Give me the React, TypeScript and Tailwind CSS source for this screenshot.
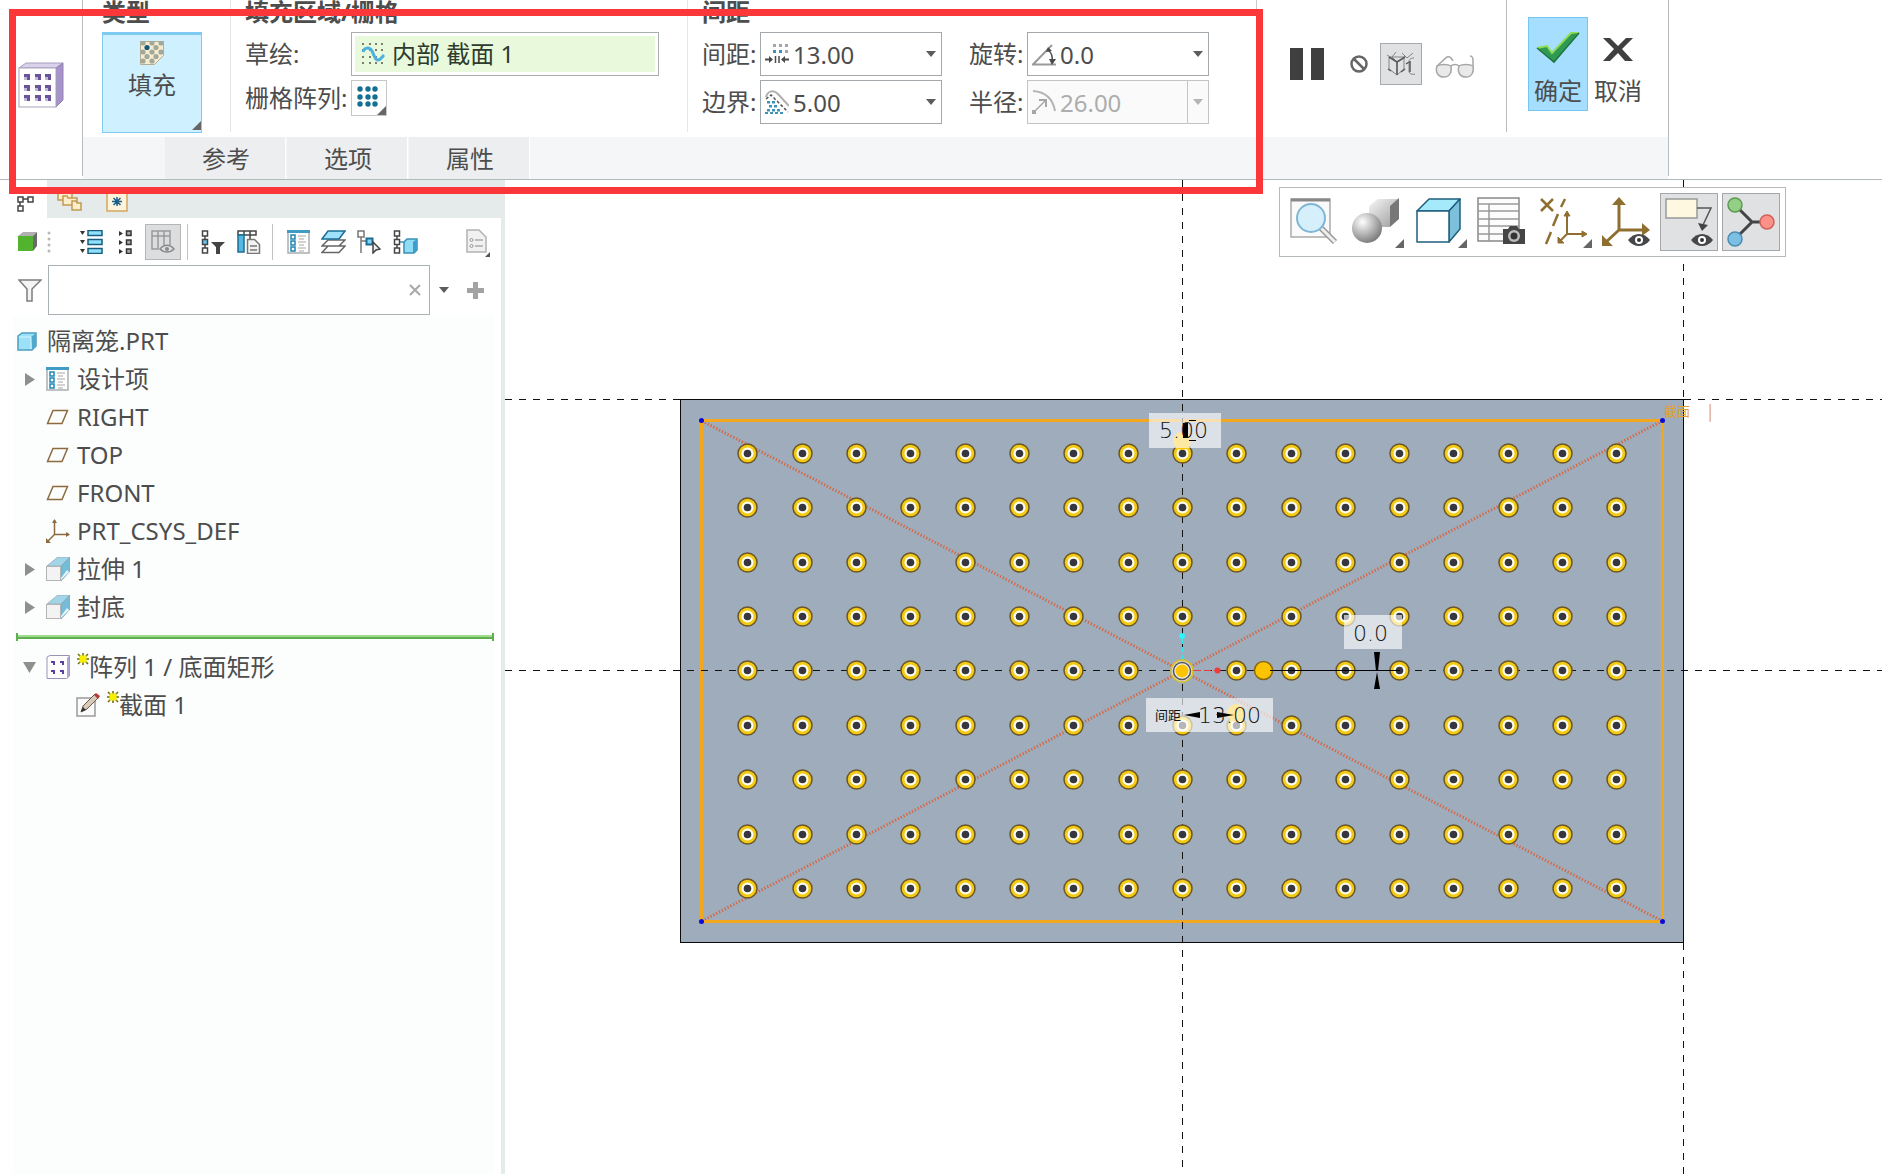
import React from "react";

type IconProps = { w: number; h: number; children: React.ReactNode; className?: string };

function Icon({ w, h, children, className = "" }: IconProps) {
  return (
    <svg width={w} height={h} viewBox={`0 0 ${w} ${h}`} className={`shrink-0 ${className}`} fill="none" aria-hidden="true">
      {children}
    </svg>
  );
}

/* ---------- ribbon icons ---------- */

function PatternCubeIcon() {
  return (
    <Icon w={46} h={46}>
      <path d="M1 6 8 1h37l-7 5z" fill="#d9d2ea" stroke="#a79cc0" />
      <path d="M38 6l7-5v37l-7 7z" fill="#a793cc" stroke="#9283b3" />
      <rect x="1" y="6" width="37" height="39" fill="#fff" stroke="#a9a3ba" />
      {[12, 23, 33].map((y) =>
        [6, 17, 27].map((x) => (
          <g key={`${x}-${y}`}>
            <rect x={x} y={y} width="6" height="6" fill="#c3b7dc" />
            <path d={`M${x} ${y}h6v6h-3v-3h-3z`} fill="#6a5399" />
          </g>
        ))
      )}
    </Icon>
  );
}

function FillIcon() {
  return (
    <Icon w={24} h={24}>
      <path d="M.5.5h23v14l-9 9H.5z" fill="#f6ecd2" stroke="#b7ad92" />
      {[2, 11, 20].map((y) => [2, 11, 20].map((x) => <circle key={`${x}-${y}`} cx={x + 1} cy={y} r={x + y > 36 ? 0 : 2.6} fill="#a3a899" />))}
      {[6.5, 15.5].map((y) => [7, 16].map((x) => <circle key={`${x}-${y}`} cx={x} cy={y} r={2.6} fill={x === 7 && y === 6.5 ? "#125a78" : "#a3a899"} />))}
    </Icon>
  );
}

function SketchIcon() {
  return (
    <Icon w={24} h={24}>
      {[2, 8, 15, 21].map((y) => [2, 9, 15, 21].map((x) => <rect key={`${x}-${y}`} x={x - 1} y={y - 1} width="2" height="2" fill="#7b7b70" />))}
      <path d="M2 10c1-4 6-6 9-1 3 6 3 9 6 9s4-3 6-5" stroke="#4fb0df" strokeWidth="3" />
    </Icon>
  );
}

function GridIcon() {
  return (
    <Icon w={22} h={22}>
      {[3, 11, 18].map((y) => [3, 11, 18].map((x) => <circle key={`${x}-${y}`} cx={x} cy={y} r="2.7" fill="#136f93" />))}
    </Icon>
  );
}

function SpacingIcon() {
  return (
    <Icon w={24} h={24}>
      {[2, 8].map((y) =>
        [8, 14, 20].map((x) => <rect key={`${x}-${y}`} x={x} y={y} width="3" height="3" fill={y === 8 && x < 20 ? "#3b93bd" : "#a5a5a5"} />)
      )}
      <path d="M0 17.500h5M19 17.500h5" stroke="#4a4a4a" strokeWidth="2" />
      <path d="M4 14l4 3.500L4 21zM20 14l-4 3.500 4 3.500z" fill="#4a4a4a" />
      <path d="M10.500 14v7M14 14v7" stroke="#4a4a4a" strokeWidth="1.500" />
    </Icon>
  );
}

function BorderIcon() {
  return (
    <Icon w={24} h={24}>
      <path d="M1 7c2-7 8-7 12-3l11 12" stroke="#b0b0b0" strokeWidth="2" />
      <path d="M1 9l5-4 17 17" stroke="#555" strokeWidth="1.500" strokeDasharray="3 2" />
      {[
        [3, 12], [8, 12], [5, 16], [10, 16], [3, 20], [8, 20], [13, 20], [1, 23], [6, 23], [11, 23], [16, 23],
      ].map(([x, y]) => (
        <rect key={`${x}-${y}`} x={x - 1} y={y - 1} width="3" height="2.500" fill="#3b93bd" />
      ))}
    </Icon>
  );
}

function AngleIcon() {
  return (
    <Icon w={24} h={24}>
      <path d="M20 3 1 22.500h23" stroke="#9a9a9a" strokeWidth="2" />
      <path d="M16 8c4 3 5 6 4 12" stroke="#4a4a4a" strokeWidth="1.500" />
      <path d="M14 10l2-5 4 4zM17 17h7l-4 6z" fill="#4a4a4a" />
    </Icon>
  );
}

function RadiusIcon() {
  return (
    <Icon w={24} h={24}>
      <path d="M1 1c13 1 20 8 22 20" stroke="#b4b4b4" strokeWidth="2" />
      <path d="M2 22 13 11" stroke="#a6a6a6" strokeWidth="1.500" />
      <path d="M7 10h7v7" stroke="#a6a6a6" strokeWidth="2" />
      <rect x="0" y="20" width="4" height="4" fill="#a6a6a6" />
    </Icon>
  );
}

function Corner({ className = "" }: { className?: string }) {
  return (
    <Icon w={9} h={9} className={`absolute right-0 bottom-0 ${className}`}>
      <path d="M9 0v9H0z" fill="#666" />
    </Icon>
  );
}

function DownTriangle({ color = "#5c5c5c" }: { color?: string }) {
  return (
    <Icon w={10} h={7}>
      <path d="M0 0h10L5 6z" fill={color} />
    </Icon>
  );
}

/* ---------- ribbon ---------- */

function Combo({ id, label, icon, value, disabled = false }: { id: string; label: string; icon: React.ReactNode; value: string; disabled?: boolean }) {
  return (
    <div className="flex items-center">
      <label htmlFor={id} className="w-[58px] whitespace-nowrap">
        {label}
      </label>
      <div className={`flex h-[44px] w-[182px] items-center border ${disabled ? "border-[#c4c4c4] bg-[#fafafa] text-[#adadad]" : "border-[#a2a8ab] bg-white"}`}>
        <span className="flex w-[32px] shrink-0 justify-center">{icon}</span>
        <input id={id} defaultValue={value} disabled={disabled} className="h-full w-0 flex-1 bg-transparent outline-none" />
        <button
          type="button"
          disabled={disabled}
          aria-label={`${label} 列表`}
          className={`flex h-full w-[21px] items-center justify-center ${disabled ? "border-l border-[#c4c4c4]" : ""}`}
        >
          <DownTriangle color={disabled ? "#b5b5b5" : undefined} />
        </button>
      </div>
    </div>
  );
}

function SectionTitle({ children }: { children: React.ReactNode }) {
  return <h2 className="h-[32px] text-[24px] leading-[24px] font-bold">{children}</h2>;
}

function Ribbon() {
  return (
    <header className="flex h-[180px] shrink-0 border-b border-[#b0b9bc] bg-white">
      <div className="w-[82px] shrink-0 pt-[62px] pl-[18px]">
        <PatternCubeIcon />
      </div>
      <div className="mb-[3px] shrink-0 border-x border-[#b7bcc0]">
        <div className="flex h-[137px] items-start">
          <section className="h-[132px] w-[148px] border-r border-[#e4e6e8] pl-[19px]">
            <SectionTitle>类型</SectionTitle>
            <button type="button" className="relative flex h-[101px] w-[100px] flex-col items-center border border-t-[3px] border-[#7fcaf2] bg-[#cff0fe] pt-[6px]">
              <FillIcon />
              <span className="mt-1 leading-[32px]">填充</span>
              <Corner className="mb-[2px]" />
            </button>
          </section>
          <section className="h-[132px] w-[457px] border-r border-[#e4e6e8] pl-[14px]">
            <SectionTitle>填充区域/栅格</SectionTitle>
            <div className="flex items-center">
              <label htmlFor="sketch" className="w-[106px]">
                草绘:
              </label>
              <div className="flex h-[44px] w-[308px] border border-[#a9aeb0] bg-white p-[3px]">
                <div className="flex flex-1 items-center gap-[7px] bg-[#e8fadb] pl-[6px]">
                  <SketchIcon />
                  <input id="sketch" readOnly defaultValue="内部 截面 1" className="w-0 flex-1 bg-transparent text-[#2e3a2e] outline-none" />
                </div>
              </div>
            </div>
            <div className="mt-1 flex items-center">
              <span className="w-[106px] whitespace-nowrap">栅格阵列:</span>
              <button type="button" aria-label="栅格阵列" className="relative flex h-[36px] w-[36px] items-center justify-center border border-[#c5c8ca] pr-[2px] pb-[2px]">
                <GridIcon />
                <Corner />
              </button>
            </div>
          </section>
          <section className="h-[137px] w-[569px] border-r border-[#c9cdd0] pl-[14px]">
            <SectionTitle>间距</SectionTitle>
            <div className="grid grid-cols-[240px_240px] gap-x-[27px] gap-y-1">
              <Combo id="spacing" label="间距:" icon={<SpacingIcon />} value="13.00" />
              <Combo id="rotate" label="旋转:" icon={<AngleIcon />} value="0.0" />
              <Combo id="border" label="边界:" icon={<BorderIcon />} value="5.00" />
              <Combo id="radius" label="半径:" icon={<RadiusIcon />} value="26.00" disabled />
            </div>
          </section>
          <section className="flex h-[132px] w-[250px] items-start border-r border-[#b7bcc0] pt-[43px] pl-[33px]">
            <button type="button" aria-label="暂停" className="flex h-[42px] items-center">
              <Icon w={34} h={32}>
                <path d="M0 0h13v32H0zM21 0h13v32H21z" fill="#3f3f3f" />
              </Icon>
            </button>
            <button type="button" aria-label="无预览" className="ml-[26px] flex h-[42px] items-center">
              <Icon w={18} h={18}>
                <circle cx="9" cy="9" r="7.500" stroke="#666" strokeWidth="2.500" />
                <path d="M4 4l10 10" stroke="#666" strokeWidth="2.500" />
              </Icon>
            </button>
            <button type="button" aria-label="几何预览" className="ml-[12px] flex h-[42px] w-[42px] items-center justify-center border border-[#a6a8aa] bg-[#dfe1e3]">
              <Icon w={30} h={28}>
                <path
                  d="M3 7h16M3 7v12l8 6V12L3 7M11 12l8-5M11 25l7-6V8M11 12 6 7 10 2M1 5l3 2M16 3l5 5 6-5M28 8c-4 0-5 2-5 4v10c1 2 3 3 6 2"
                  stroke="#858585"
                />
                <path d="M3 7l8 5v13M11 12l8-5M24 11v11M2 19l3 2M20 14l3-2M15 22l4-3" stroke="#5a5a5a" strokeWidth="1.500" />
              </Icon>
            </button>
            <button type="button" aria-label="特征预览" className="ml-[13px] flex h-[42px] items-center pt-[6px]">
              <Icon w={40} h={24}>
                <g stroke="#a6a6a6" strokeWidth="1.500" fill="#e9e9e9">
                  <path d="M2 11c3-2 11-2 14 0 1 6-1 11-7 11s-9-5-7-11zM24 11c3-2 11-2 14 0 1 6-1 11-7 11s-9-5-7-11z" />
                  <path d="M16 11c2-2 6-2 8 0M2 11 12 2c2-1 4 0 6 4M38 11V5c0-3-2-4-3-4" fill="none" />
                </g>
              </Icon>
            </button>
          </section>
          <section className="flex w-[161px] items-start pt-[17px] pl-[21px]">
            <button type="button" className="flex h-[94px] w-[60px] flex-col items-center border border-[#76c6f4] bg-[#a5deff] pt-[14px]">
              <Icon w={44} h={31}>
                <path d="M1 16l10-2 5 7L35 1l8-1-25 31z" fill="#2f9a52" />
                <path d="M1 16l10-2 5 7L35 1l8-1" stroke="#8fdc57" strokeWidth="2" />
                <path d="M1 16l17 14L43 1" stroke="#20733f" strokeWidth="1.500" />
              </Icon>
              <span className="mt-[12px] leading-[32px]">确定</span>
            </button>
            <button type="button" className="flex h-[94px] w-[60px] flex-col items-center pt-[21px]">
              <Icon w={30} h={23}>
                <path d="M0 0h7l8 8 8-8h7L19 11l11 12h-8l-7-8-8 8H0l11-12z" fill="#404040" />
              </Icon>
              <span className="mt-[14px] leading-[32px]">取消</span>
            </button>
          </section>
        </div>
        <nav className="flex h-[42px] gap-px bg-[#f5f6f8] pl-[82px]">
          {["参考", "选项", "属性"].map((t) => (
            <button key={t} type="button" className="w-[121px] border-r border-white bg-[#eceeef] pt-[2px] pl-[2px]">
              {t}
            </button>
          ))}
        </nav>
      </div>
    </header>
  );
}

/* ---------- model tree ---------- */

function ListIcon() {
  return (
    <Icon w={23} h={24}>
      <rect x="1" y="1" width="21" height="22" fill="#fff" stroke="#a9aeb2" strokeWidth="1.500" />
      <path d="M0 1.500h23" stroke="#3f9dc4" strokeWidth="3" />
      {[6, 12, 18].map((y) => (
        <g key={y}>
          <rect x="4" y={y - 1} width="4" height="4" stroke="#1f86b4" strokeWidth="1.500" />
          <path d={`M11 ${y}h8M12 ${y + 3}h5`} stroke="#a5a5a5" />
        </g>
      ))}
    </Icon>
  );
}

function PlaneIcon() {
  return (
    <Icon w={23} h={16}>
      <path d="M1.500 14.500 7 1.500h14.500l-5.500 13z" stroke="#8b6b3f" strokeWidth="1.500" />
    </Icon>
  );
}

function CsysIcon() {
  return (
    <Icon w={24} h={24}>
      <path d="M8.500 1v14.500H23M8.500 15.500 1 23" stroke="#8b6b3f" strokeWidth="1.500" />
      <path d="M6 4l2.500-4L11 4zM20 13l4 2.500-4 2.500zM0 19v5h5z" fill="#8b6b3f" />
    </Icon>
  );
}

function ExtrudeIcon() {
  return (
    <Icon w={24} h={24}>
      <path d="M1 9 12 0h12L15 9z" fill="#a3d5e8" stroke="#9ab2bc" />
      <path d="M15 9l9-9v14L15 24z" fill="#74bcd8" stroke="#8aa8b5" />
      <path d="M15 21l6-8 2 2-8 8z" fill="#dff6ff" />
      <rect x=".5" y="9.500" width="14" height="14" fill="#f3f3f3" stroke="#b4b4b4" />
    </Icon>
  );
}

function PartIcon() {
  return (
    <Icon w={20} h={19}>
      <path d="M1 4 5 1h14v13l-4 4H1z" fill="#9be1f9" stroke="#4f9dbf" strokeWidth="1.500" />
      <path d="M14 5l5-4v13l-4 4z" fill="#4fa8d0" />
      <path d="M2 5h12v12" stroke="#d8f5ff" />
    </Icon>
  );
}

function PatternIcon() {
  return (
    <Icon w={24} h={24}>
      <path d="M1 2 4 .5h19.500V21l-3 2.500H1z" fill="#fff" stroke="#9b92b8" />
      <path d="M21 3l2.500-2.500V21L21 23.500z" fill="#b3a4d6" />
      {[6, 15].map((y) => [5, 14].map((x) => <path key={`${x}-${y}`} d={`M${x} ${y}h4v4h-2v-2h-2z`} fill="#5d3fa0" />))}
    </Icon>
  );
}

function SectionIcon() {
  return (
    <Icon w={24} h={24}>
      <rect x="1" y="5" width="18" height="18" fill="#fbfbfb" stroke="#9a9a9a" strokeWidth="1.500" />
      <path d="M5 19l2-6L19 1l4 3L11 16z" fill="#d9cbb8" stroke="#6b5a4a" />
      <path d="M18 2l2-2 4 3-2 3z" fill="#b5393a" />
      <path d="M5 19l2-5 3 3z" fill="#333" />
    </Icon>
  );
}

function Spark() {
  return (
    <Icon w={12} h={12} className="mb-[16px]">
      <path d="M6 0v12M0 6h12M1 1l10 10M11 1 1 11" stroke="#6d6a00" strokeWidth="1.500" />
      <rect x="2.500" y="2.500" width="7" height="7" fill="#f6f000" />
    </Icon>
  );
}

type Node = { label: string; icon: React.ReactNode; level: number; state?: "open" | "closed"; spark?: boolean };

const upper: Node[] = [
  { label: "隔离笼.PRT", icon: <PartIcon />, level: 0 },
  { label: "设计项", icon: <ListIcon />, level: 1, state: "closed" },
  { label: "RIGHT", icon: <PlaneIcon />, level: 1 },
  { label: "TOP", icon: <PlaneIcon />, level: 1 },
  { label: "FRONT", icon: <PlaneIcon />, level: 1 },
  { label: "PRT_CSYS_DEF", icon: <CsysIcon />, level: 1 },
  { label: "拉伸 1", icon: <ExtrudeIcon />, level: 1, state: "closed" },
  { label: "封底", icon: <ExtrudeIcon />, level: 1, state: "closed" },
];

const lower: Node[] = [
  { label: "阵列 1 / 底面矩形", icon: <PatternIcon />, level: 1, state: "open", spark: true },
  { label: "截面 1", icon: <SectionIcon />, level: 2, spark: true },
];

const indent = ["pl-[4px]", "pl-[8px]", "pl-[38px]"];

function Tree({ nodes }: { nodes: Node[] }) {
  return (
    <ul>
      {nodes.map((n) => (
        <li key={n.label} className={`flex h-[38px] items-center ${indent[n.level]}`}>
          {n.level > 0 && (
            <span className="flex w-[25px] shrink-0 items-center pl-[2px]">
              {n.state && (
                <button type="button" aria-label={n.label} aria-expanded={n.state === "open"}>
                  <Icon w={13} h={13}>
                    <path d={n.state === "open" ? "M0 1h13L6.500 12z" : "M2 0l10 6.500L2 13z"} fill="#8f8f8f" />
                  </Icon>
                </button>
              )}
            </span>
          )}
          <span className={`flex shrink-0 ${n.level === 0 ? "w-[30px]" : "w-[31px]"}`}>{n.icon}</span>
          {n.spark && <Spark />}
          <span className="whitespace-pre">{n.label}</span>
        </li>
      ))}
    </ul>
  );
}

function TreeNodesArt({ accent = "#fff" }: { accent?: string }) {
  return (
    <g stroke="#444" strokeWidth="1.500">
      <path d="M4 4v16" />
      <rect x="1.500" y="1" width="5" height="5" fill="#fff" />
      <rect x="1.500" y="9.500" width="5" height="5" fill={accent} />
      <rect x="1.500" y="18" width="5" height="5" fill="#fff" />
    </g>
  );
}

function TreeToolbar() {
  return (
    <div className="flex h-[47px] items-center pl-[18px]">
      <Icon w={19} h={20}>
        <path d="M0 4 5 0h14l-4 4z" fill="#b0b0b0" />
        <path d="M15 4l4-4v14l-4 5z" fill="#6a6a6a" />
        <rect y="4" width="15" height="15" fill="#52b32f" />
      </Icon>
      <Icon w={4} h={24} className="ml-[10px]">
        {[3, 9, 15, 21].map((y) => (
          <circle key={y} cx="2" cy={y} r="1.500" fill="#b8b8b8" />
        ))}
      </Icon>
      <button type="button" aria-label="全部展开" className="ml-[29px]">
        <Icon w={23} h={24}>
          {[1, 10, 19].map((y) => (
            <g key={y}>
              <path d={`M0 ${y}h5l-2.500 4z`} fill="#333" />
              <rect x="8" y={y - 0.5} width="14" height="5" fill="#8fe0fb" stroke="#175d80" strokeWidth="1.500" />
            </g>
          ))}
        </Icon>
      </button>
      <button type="button" aria-label="全部折叠" className="ml-[16px]">
        <Icon w={13} h={24}>
          {[1, 10, 19].map((y) => (
            <g key={y}>
              <path d={`M0 ${y}l4 2.500-4 2.500z`} fill="#333" />
              <rect x="7.500" y={y} width="4.500" height="4.500" fill="#aaa" stroke="#333" strokeWidth="1.500" />
            </g>
          ))}
        </Icon>
      </button>
      <button type="button" aria-label="树列" className="ml-[13px] flex h-[36px] w-[36px] items-center justify-center border border-[#b3b5b7] bg-[#dcdddf]">
        <Icon w={24} h={24}>
          <path d="M1 1h18v5H1zM1 6h6v13H1zM7 1v5M13 1v16M19 6v9" stroke="#9a9a9a" strokeWidth="1.500" />
          <path d="M9 19c4-5 10-5 14 0-4 4-10 4-14 0z" fill="#dcdddf" stroke="#8a8a8a" strokeWidth="1.500" />
          <circle cx="16" cy="19" r="2" fill="#8a8a8a" />
        </Icon>
      </button>
      <span className="ml-[6px] h-[36px] w-px bg-[#bfc3c5]" />
      <button type="button" aria-label="树过滤器" className="ml-[13px]">
        <Icon w={24} h={24}>
          <TreeNodesArt accent="#64c5ee" />
          <path d="M10 12h14l-5 5v7h-4v-7z" fill="#444" />
        </Icon>
      </button>
      <button type="button" aria-label="树设置" className="ml-[12px]">
        <Icon w={24} h={24}>
          <path d="M1 1h18v4H1zM7 1v4M13 1v9" stroke="#444" strokeWidth="1.500" />
          <path d="M1 5h6v17H1z" fill="#55b8e2" stroke="#1c6d94" strokeWidth="1.500" />
          <path d="M10.500 9.500h7l5 5v9h-12z" fill="#f3f3f3" stroke="#777" strokeWidth="1.500" />
          <path d="M13 16h7M13 20h7" stroke="#777" strokeWidth="1.500" />
        </Icon>
      </button>
      <span className="ml-[11px] h-[36px] w-px bg-[#bfc3c5]" />
      <button type="button" aria-label="设计项" className="ml-[14px]">
        <ListIcon />
      </button>
      <button type="button" aria-label="层" className="ml-[11px]">
        <Icon w={25} h={24}>
          <path d="M1 22.500 7 16h17l-6 6.500zM1 16l6-6h17l-6 6z" fill="#fff" stroke="#666" strokeWidth="1.500" />
          <path d="M1 9 7 1h17l-6 8z" fill="#9fe2fb" stroke="#1c6d94" strokeWidth="1.500" />
        </Icon>
      </button>
      <button type="button" aria-label="定位" className="ml-[11px]">
        <Icon w={24} h={24}>
          <path d="M4 6v17M4 11h6" stroke="#777" strokeWidth="1.500" />
          <rect x="1" y="1" width="6" height="6" fill="#fff" stroke="#777" strokeWidth="1.500" />
          <rect x="9.500" y="8.500" width="6" height="6" fill="#7fd6f7" stroke="#1c6d94" strokeWidth="2" />
          <path d="M16 12v11l3-3 4-1z" fill="#eee" stroke="#444" strokeWidth="1.500" />
        </Icon>
      </button>
      <button type="button" aria-label="预选" className="ml-[12px]">
        <Icon w={25} h={24}>
          <TreeNodesArt />
          <path d="M7 12h4M11 12l3-3h10v11l-3 3H11z" fill="#8fdcf7" stroke="#3d8fb5" strokeWidth="1.500" />
          <path d="M20 12l4-3v11l-4 3z" fill="#3f9ecb" />
        </Icon>
      </button>
      <button type="button" aria-label="显示" className="relative mr-[11px] ml-auto flex h-[30px] w-[24px] pt-[2px]">
        <Icon w={21} h={24}>
          <path d="M1 1h12l7 7v15H1z" fill="#f1f1f1" stroke="#b3b3b3" strokeWidth="1.500" />
          <circle cx="5.500" cy="11" r="1.500" stroke="#999" />
          <circle cx="5.500" cy="17" r="1.500" stroke="#999" />
          <path d="M9 11h8M9 17h8" stroke="#aaa" strokeWidth="1.500" />
        </Icon>
        <Icon w={5} h={5} className="absolute right-0 bottom-0">
          <path d="M5 0v5H0z" fill="#555" />
        </Icon>
      </button>
    </div>
  );
}

function ModelPanel() {
  return (
    <aside className="flex w-[505px] shrink-0 flex-col border-r-[4px] border-[#e5eaeb] bg-white">
      <div className="flex h-[38px] shrink-0 bg-white">
        <button type="button" aria-label="模型树" className="flex w-[47px] items-end pb-[6px] pl-[17px]">
          <Icon w={17} h={16}>
            <path d="M3 3h12M3 3v10" stroke="#444" strokeWidth="1.500" />
            <path d="M1 1h5v5H1zM11 1h5v5h-5zM1 10h5v5H1z" fill="#fff" stroke="#444" strokeWidth="1.500" />
          </Icon>
        </button>
        <div className="-mr-[4px] flex flex-1 items-end bg-[#e5eaeb] pb-[6px] pl-[10px]">
          <button type="button" aria-label="文件夹浏览器">
            <Icon w={25} h={22}>
              {[0, 5, 14].map((x, i) => (
                <path key={x} d={`M${x + 1} ${i * 5 + 1}h4l1 2h${i === 2 ? 4 : 9}v7H${x + 1}z`} fill="#fdeecb" stroke="#c29a52" strokeWidth="1.500" />
              ))}
            </Icon>
          </button>
          <button type="button" aria-label="收藏夹" className="ml-[24px]">
            <Icon w={22} h={22}>
              <rect x="1" y="1" width="20" height="20" fill="#fdf3dc" stroke="#d2a85c" strokeWidth="1.500" />
              <path d="M11 7v9M6 11.500h10M7.500 8l7 7M14.500 8l-7 7" stroke="#1a5f88" strokeWidth="1.500" />
            </Icon>
          </button>
        </div>
      </div>
      <TreeToolbar />
      <div className="flex h-[50px] items-center">
        <Icon w={24} h={23} className="ml-[18px]">
          <path d="M1 1h22l-9 9v12h-5V10z" fill="#f4f4f4" stroke="#7c7c7c" strokeWidth="1.500" />
        </Icon>
        <div className="ml-[6px] flex h-[50px] flex-1 items-center border border-[#abb2b5]">
          <input aria-label="搜索" className="h-full w-0 flex-1 bg-transparent px-2 outline-none" />
          <button type="button" aria-label="清除" className="mr-[8px]">
            <Icon w={12} h={12}>
              <path d="M1 1l10 10M11 1 1 11" stroke="#a8a8a8" strokeWidth="2" />
            </Icon>
          </button>
        </div>
        <button type="button" aria-label="搜索选项" className="ml-[9px]">
          <DownTriangle />
        </button>
        <button type="button" aria-label="添加" className="mr-[17px] ml-[18px]">
          <Icon w={17} h={17}>
            <path d="M6 0h5v6h6v5h-6v6H6v-6H0V6h6z" fill="#a3a3a3" />
          </Icon>
        </button>
      </div>
      <div className="mr-[7px] ml-[13px] flex-1 bg-[#fcfdfd] pt-[7px]">
        <Tree nodes={upper} />
        <div className="flex h-[22px] items-center pl-[3px]">
          <span className="h-[8px] w-[2px] bg-[#5fae4f]" />
          <span className="h-[4px] flex-1 border-b-2 border-[#5fae4f] bg-[#9fdc8c]" />
          <span className="h-[8px] w-[2px] bg-[#5fae4f]" />
        </div>
        <Tree nodes={lower} />
      </div>
    </aside>
  );
}

/* ---------- graphics area ---------- */

const columns = Array.from({ length: 17 }, (_, i) => Math.round(747.4 + i * 54.31) + 0.5);
const rows = Array.from({ length: 9 }, (_, i) => Math.round(453 + i * 54.36) + 0.5);

function Model() {
  return (
    <svg className="absolute inset-0 h-full w-full" viewBox="505 180 1377 994" preserveAspectRatio="xMinYMin slice" fill="none">
      <g stroke="#111" strokeDasharray="7 7">
        <path d="M505 399.500h175M1684 399.500h198M1683.500 180v219M1683.500 943v231" />
      </g>
      <rect x="680.500" y="399.500" width="1003" height="543" fill="#9facbc" stroke="#0a0a0a" />
      <path d="M702 421 1662 921M702 921 1662 421" stroke="#d9633a" strokeWidth="3" strokeDasharray="1.200 2" />
      <rect x="701.500" y="420.500" width="961" height="501" stroke="#f2a71f" strokeWidth="3" />
      <g stroke="#111" strokeDasharray="7 7">
        <path d="M1182.500 180v994M505 670.500h1377" />
      </g>
      {[420.5, 921.5].map((y) => [701.5, 1662.5].map((x) => <circle key={`${x}-${y}`} cx={x} cy={y} r="2.500" fill="#0b0bd6" />))}
      {rows.map((y) =>
        columns.map((x) => (
          <g key={`${x}-${y}`}>
            <circle cx={x} cy={y} r="9.500" fill="#f4cb14" stroke="#6a5626" strokeWidth="1.500" />
            <circle cx={x} cy={y} r="6" fill="#fffdf0" />
            <circle cx={x} cy={y} r="3.800" fill="#35363f" />
          </g>
        ))
      )}
      <path d="M1182.500 660v-24" stroke="#35e6ec" strokeWidth="1.500" strokeDasharray="5 3" />
      <circle cx="1182" cy="636" r="3" fill="#2ff3f6" />
      <path d="M1194 670.500h24" stroke="#e0413a" strokeDasharray="7 3" />
      <circle cx="1217.500" cy="670.500" r="3" fill="#ef3b3b" />
      <circle cx="1182" cy="671" r="11" fill="#d9d9d9" stroke="#d8c020" strokeWidth="1.500" />
      <circle cx="1182" cy="671" r="8.500" fill="#eee" stroke="#555" strokeWidth="1.500" />
      <circle cx="1182" cy="671" r="6.500" fill="#fcc300" />
      <circle cx="1263.500" cy="670.500" r="9" fill="#fcc300" stroke="#8a6a10" strokeWidth="1.500" />
      <circle cx="1182" cy="441" r="9" fill="#fcc300" />
      <circle cx="1236" cy="713" r="9" fill="#fcc300" />
      <path d="M1270 670.500h130" stroke="#000" />
      <path d="M1374 652h6l-2 19h-2zM1374 689h6l-3-17z" fill="#000" />

      <g fill="#fff" fillOpacity=".64">
        <rect x="1149" y="413" width="72" height="35" />
        <rect x="1344" y="615" width="58" height="34" />
        <rect x="1146" y="698" width="127" height="34" />
      </g>
      <path d="M1183 423h5v15h-5z" fill="#000" />
      <path d="M1189 420.500h7M1189 440.500h7" stroke="#000" />
      <path d="M1184 715l16-3v6zM1217 712l17 3-17 3z" fill="#000" />
      <g fill="#111" fontFamily="'DejaVu Sans', sans-serif" fontWeight="200" fontSize="22">
        <text x="1159" y="438">5.00</text>
        <text x="1353" y="641">0.0</text>
        <text x="1198" y="723">13.00</text>
      </g>
      <text x="1155" y="720" fontSize="13" fill="#111" fontFamily="'Noto Sans CJK SC', sans-serif">
        间距
      </text>
      <text x="1664" y="416" fontSize="13" fill="#e3a02c" fontFamily="'Noto Sans CJK SC', sans-serif">
        截面
      </text>
      <text x="1708" y="417" fontSize="16" fill="#e3a02c" fontFamily="'Noto Sans CJK SC', sans-serif">
        |
      </text>
    </svg>
  );
}

function Eye({ x, y }: { x: number; y: number }) {
  return (
    <g transform={`translate(${x} ${y})`}>
      <path d="M-11 0C-5-8 5-8 11 0 5 8-5 8-11 0z" fill="#45474b" />
      <circle r="4" fill="#fff" />
      <circle r="2" fill="#333" />
    </g>
  );
}

const viewTools: { name: string; active?: boolean; menu?: boolean; art: React.ReactNode }[] = [
  {
    name: "重新调整",
    art: (
      <>
        <rect x="1" y="2" width="39" height="38" fill="#fafafa" stroke="#aaa" strokeWidth="1.500" />
        <path d="M1 3h39" stroke="#888" strokeWidth="3" />
        <path d="M31 31l14 14" stroke="#999" strokeWidth="6" />
        <path d="M31 31l14 14" stroke="#eee" strokeWidth="3" />
        <circle cx="21" cy="21" r="14" fill="#d5f0fb" stroke="#7fb6d4" strokeWidth="2" />
      </>
    ),
  },
  {
    name: "渲染样式",
    menu: true,
    art: (
      <>
        <defs>
          <radialGradient id="ball" cx=".35" cy=".3" r=".75">
            <stop stopColor="#fff" />
            <stop offset="1" stopColor="#777" />
          </radialGradient>
          <linearGradient id="box" x2="1" y2="1">
            <stop stopColor="#f7f7f7" />
            <stop offset="1" stopColor="#999" />
          </linearGradient>
        </defs>
        <path d="M17 9h21v21H17zM17 9l9-7h21l-9 7z" fill="url(#box)" />
        <path d="M38 9l9-8v21l-9 8z" fill="#777" />
        <circle cx="15" cy="31" r="15" fill="url(#ball)" />
      </>
    ),
  },
  {
    name: "显示样式",
    menu: true,
    art: (
      <g stroke="#1f5f7f" strokeWidth="1.500" strokeLinejoin="round">
        <path d="M2 14 14 2h31L34 14z" fill="#a5eafb" />
        <path d="M34 14 45 2v30L34 45z" fill="#7cc0da" />
        <path d="M2 14h32v31H2z" fill="#fff" />
      </g>
    ),
  },
  {
    name: "已保存方向",
    art: (
      <>
        <rect x="1" y="1" width="41" height="43" fill="#fcfcfc" stroke="#888" strokeWidth="1.500" />
        <path d="M1 7h41M1 14h41M1 22h41M1 29h41M1 37h41M12 7v37" stroke="#999" strokeWidth="1.500" />
        <path d="M26 32h5l2-3h7l2 3h6v15H26z" fill="#454545" />
        <circle cx="37" cy="39" r="6" fill="#bbb" />
        <circle cx="37" cy="39" r="3.500" fill="#333" />
      </>
    ),
  },
  {
    name: "基准显示",
    menu: true,
    art: (
      <g stroke="#8f6f30" strokeWidth="2.500">
        <path d="M1 2l12 12M13 2 1 14M25 2l-4 8M18 17l-5 12M11 35l-5 12" />
        <path d="M27 17v20h18M27 37l-8 8" strokeWidth="2" />
        <path d="M24 19l3-5 3 5zM42 34l5 3-5 3zM18 40v6h6z" fill="#8f6f30" strokeWidth="1" />
      </g>
    ),
  },
  {
    name: "坐标系显示",
    art: (
      <>
        <path d="M17 4v29h26M17 33 4 45" stroke="#8f6f30" strokeWidth="3" />
        <path d="M10 8l7-8 7 8zM40 26l8 7-8 6zM0 38v11h11z" fill="#8f6f30" />
        <Eye x={37} y={43} />
      </>
    ),
  },
  {
    name: "注释显示",
    active: true,
    art: (
      <>
        <rect x="1" y="2" width="31" height="19" fill="#fef8e0" stroke="#999" strokeWidth="1.500" />
        <path d="M32 11h14l-8 17" stroke="#555" strokeWidth="1.500" />
        <path d="M33 26l10 2-6 6z" fill="#444" />
        <Eye x={37} y={43} />
      </>
    ),
  },
  {
    name: "旋转中心",
    active: true,
    art: (
      <>
        <path d="M8 8l17 17L8 42M25 25h16" stroke="#444" strokeWidth="3" />
        <circle cx="8" cy="8" r="7" fill="#93cf85" stroke="#5d9a52" strokeWidth="1.500" />
        <circle cx="40" cy="25" r="7" fill="#fb9189" stroke="#d06059" strokeWidth="1.500" />
        <circle cx="8" cy="42" r="7" fill="#7cbfe3" stroke="#4a8db2" strokeWidth="1.500" />
      </>
    ),
  },
];

function ViewToolbar() {
  return (
    <div className="absolute top-[7px] right-[96px] flex h-[70px] w-[507px] items-center justify-between border border-[#b4b9bb] bg-white px-[5px]">
      {viewTools.map((t) => (
        <button
          key={t.name}
          type="button"
          aria-label={t.name}
          className={`relative flex h-[58px] w-[58px] items-center justify-center border ${t.active ? "border-[#a4a7aa] bg-[#dfe1e3]" : "border-transparent"}`}
        >
          <Icon w={48} h={50}>
            {t.art}
          </Icon>
          {t.menu && <Corner className="mb-[2px]" />}
        </button>
      ))}
    </div>
  );
}

export default function App() {
  return (
    <div className="relative flex h-screen flex-col overflow-hidden bg-white font-['Noto_Sans','Noto_Sans_CJK_SC',sans-serif] text-[24px] leading-[32px] text-[#4d4d4d]">
      <Ribbon />
      <div className="flex min-h-0 flex-1">
        <ModelPanel />
        <main className="relative flex-1 overflow-hidden">
          <Model />
          <ViewToolbar />
        </main>
      </div>
      <div className="pointer-events-none absolute top-[9px] left-[9px] h-[185px] w-[1254px] border-[7px] border-[#fb3739]" />
    </div>
  );
}
